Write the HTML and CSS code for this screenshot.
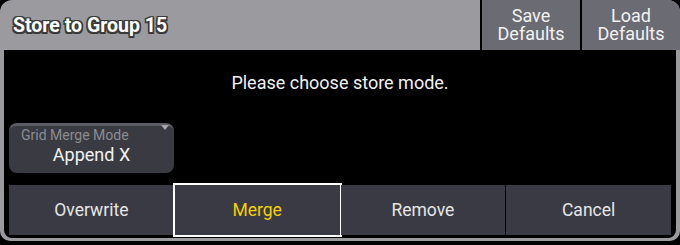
FILE: index.html
```html
<!DOCTYPE html>
<html lang="en">
<head>
    <meta charset="UTF-8">
    <title>Store to Group 15</title>
    <link rel="stylesheet" href="styles.css">
</head>
<body>
    <div class="window">
        <div class="titlebar">
            <div class="title">Store to Group 15</div>
            <div class="title-btn">Save<br>Defaults</div>
            <div class="title-btn">Load<br>Defaults</div>
        </div>
        <div class="content">
            <div class="message">Please choose store mode.</div>
            <div class="dropdown">
                <div class="dd-label">Grid Merge Mode</div>
                <div class="dd-value">Append X</div>
                <span class="dd-arrow"></span>
            </div>
            <div class="actions">
                <div class="action">Overwrite</div>
                <div class="action selected">Merge</div>
                <div class="action">Remove</div>
                <div class="action">Cancel</div>
            </div>
        </div>
    </div>
</body>
</html>
```

FILE: styles.css
```css
body { margin: 0; background: #000; font-family: Roboto, "Liberation Sans", sans-serif; }
.window { width: 680px; height: 241px; background: #9a9a9f; border-radius: 12px 12px 10px 10px; overflow: hidden; display: flex; flex-direction: column; }
.titlebar { display: flex; height: 50px; }
.title { flex: 1; padding-left: 13px; line-height: 51px; font-size: 19.5px; font-weight: bold; color: #fff; text-shadow: -1.5px -1.5px 0 #3a3a3a, 1.5px -1.5px 0 #3a3a3a, -1.5px 1.5px 0 #3a3a3a, 1.5px 1.5px 0 #3a3a3a, 0 1.5px 0 #3a3a3a, 0 -1.5px 0 #3a3a3a, 1.5px 0 0 #3a3a3a, -1.5px 0 0 #3a3a3a; }
.title-btn { width: 100px; border-left: 2px solid #000; background: #6b6b73; color: #f2f2f2; font-size: 18px; line-height: 18px; text-align: center; padding-top: 7px; box-sizing: border-box; }
.content { flex: 1; margin: 0 4px 3px 4px; background: #000; border-radius: 0 0 8px 8px; padding: 0 5px; display: flex; flex-direction: column; }
.message { height: 66px; line-height: 66px; text-align: center; color: #f2f2f2; font-size: 18px; }
.dropdown { position: relative; width: 165px; height: 50px; margin-top: 7px; box-sizing: border-box; background: #3a3a42; border-top: 3px solid #5c5c64; border-radius: 8px; }
.dd-label { padding: 1px 0 0 12px; font-size: 14px; color: #8c8c92; }
.dd-value { text-align: center; font-size: 18px; color: #f2f2f2; margin-top: 1px; }
.dd-arrow { position: absolute; top: -1px; right: 5px; border-left: 4px solid transparent; border-right: 4px solid transparent; border-top: 5px solid #a8a8ae; }
.actions { display: grid; grid-template-columns: repeat(4, 1fr); gap: 1px; height: 50px; margin-top: 12px; }
.action { background: #3a3a44; color: #e6e6e6; font-size: 17.5px; display: flex; align-items: center; justify-content: center; }
.action.selected { color: #f5d000; outline: 2px solid #fff; }
```
